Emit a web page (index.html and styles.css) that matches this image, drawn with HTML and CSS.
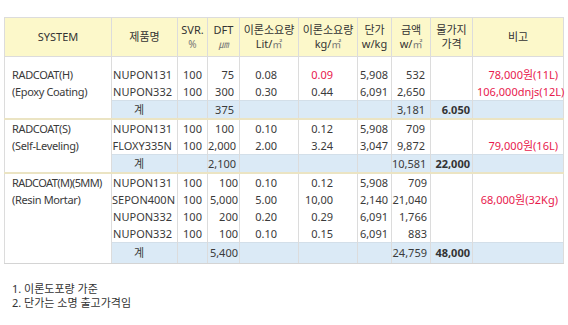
FILE: index.html
```html
<!DOCTYPE html>
<html lang="ko">
<head>
<meta charset="utf-8">
<link rel="stylesheet" href="styles.css">
</head>
<body>
<table class="spec">
  <colgroup>
    <col class="c-sys"><col class="c-prod"><col class="c-svr"><col class="c-dft"><col class="c-lit"><col class="c-kg"><col class="c-unit"><col class="c-amt"><col class="c-price"><col class="c-note">
  </colgroup>
  <thead>
    <tr>
      <th>SYSTEM</th>
      <th>제품명</th>
      <th>SVR.<br><span class="unit">%</span></th>
      <th>DFT<br><span class="unit mu">㎛</span></th>
      <th>이론소요량<br>Lit/<span class="unit">㎡</span></th>
      <th>이론소요량<br>kg/<span class="unit">㎡</span></th>
      <th>단가<br>w/kg</th>
      <th>금액<br>w/<span class="unit">㎡</span></th>
      <th>물가지<br>가격</th>
      <th>비고</th>
    </tr>
  </thead>
  <tbody class="s1">
    <tr class="first">
      <td class="sys">RADCOAT(H)</td><td class="prod">NUPON131</td><td class="svr">100</td><td class="dft">75</td><td class="lit">0.08</td><td class="kg red">0.09</td><td class="unitp">5,908</td><td class="amt">532</td><td class="price"></td><td class="note red">78,000원(11L)</td>
    </tr>
    <tr>
      <td class="sys">(Epoxy Coating)</td><td class="prod">NUPON332</td><td class="svr">100</td><td class="dft">300</td><td class="lit">0.30</td><td class="kg">0.44</td><td class="unitp">6,091</td><td class="amt">2,650</td><td class="price"></td><td class="note red">106,000dnjs(12L)</td>
    </tr>
    <tr class="sum">
      <td class="sys"></td><td class="prod-sum">계</td><td></td><td class="dft">375</td><td></td><td></td><td></td><td class="amt">3,181</td><td class="price">6.050</td><td></td>
    </tr>
  </tbody>
  <tbody class="s2">
    <tr>
      <td class="sys">RADCOAT(S)</td><td class="prod">NUPON131</td><td class="svr">100</td><td class="dft">100</td><td class="lit">0.10</td><td class="kg">0.12</td><td class="unitp">5,908</td><td class="amt">709</td><td class="price"></td><td class="note"></td>
    </tr>
    <tr>
      <td class="sys">(Self-Leveling)</td><td class="prod">FLOXY335N</td><td class="svr">100</td><td class="dft">2,000</td><td class="lit">2.00</td><td class="kg">3.24</td><td class="unitp">3,047</td><td class="amt">9,872</td><td class="price"></td><td class="note red">79,000원(16L)</td>
    </tr>
    <tr class="sum">
      <td class="sys"></td><td class="prod-sum">계</td><td></td><td class="dft">2,100</td><td></td><td></td><td></td><td class="amt">10,581</td><td class="price">22,000</td><td></td>
    </tr>
  </tbody>
  <tbody class="s3">
    <tr>
      <td class="sys tight">RADCOAT(M)(5MM)</td><td class="prod">NUPON131</td><td class="svr">100</td><td class="dft">100</td><td class="lit">0.10</td><td class="kg">0.12</td><td class="unitp">5,908</td><td class="amt">709</td><td class="price"></td><td class="note"></td>
    </tr>
    <tr>
      <td class="sys">(Resin Mortar)</td><td class="prod">SEPON400N</td><td class="svr">100</td><td class="dft">5,000</td><td class="lit">5.00</td><td class="kg">10,00</td><td class="unitp">2,140</td><td class="amt">21,040</td><td class="price"></td><td class="note red">68,000원(32Kg)</td>
    </tr>
    <tr>
      <td class="sys"></td><td class="prod">NUPON332</td><td class="svr">100</td><td class="dft">200</td><td class="lit">0.20</td><td class="kg">0.29</td><td class="unitp">6,091</td><td class="amt">1,766</td><td class="price"></td><td class="note"></td>
    </tr>
    <tr>
      <td class="sys"></td><td class="prod">NUPON332</td><td class="svr">100</td><td class="dft">100</td><td class="lit">0.10</td><td class="kg">0.15</td><td class="unitp">6,091</td><td class="amt">883</td><td class="price"></td><td class="note"></td>
    </tr>
    <tr class="sum">
      <td class="sys"></td><td class="prod-sum">계</td><td></td><td class="dft">5,400</td><td></td><td></td><td></td><td class="amt">24,759</td><td class="price">48,000</td><td></td>
    </tr>
  </tbody>
</table>
<div class="notes">
  <p>1. 이론도포량 가준</p>
  <p>2. 단가는 소명 출고가격임</p>
</div>
</body>
</html>
```

FILE: styles.css
```css
html, body {
  margin: 0;
  padding: 0;
  background: #ffffff;
}
body {
  font-family: "Noto Sans", "Noto Sans CJK KR", sans-serif;
  font-size: 11px;
  color: #3a3a3a;
}
.spec {
  margin: 17px 0 0 4px;
  border-collapse: collapse;
  table-layout: fixed;
  width: 559px;
}
.c-sys { width: 107px; }
.c-prod { width: 66px; }
.c-svr { width: 30px; }
.c-dft { width: 32px; }
.c-lit { width: 59px; }
.c-kg { width: 59px; }
.c-unit { width: 34px; }
.c-amt { width: 39px; }
.c-price { width: 42px; }
.c-note { width: 91px; }

.spec th {
  background: #fcf8ca;
  font-weight: normal;
  color: #333333;
  height: 38px;
  padding: 0;
  line-height: 14px;
  text-align: center;
  vertical-align: middle;
  border: 1px solid #dcdcdc;
  white-space: nowrap;
}
.unit {
  color: #777777;
  font-size: 10px;
}
.mu {
  font-style: italic;
}
.spec td {
  padding: 0 4px;
  height: 17px;
  line-height: 17px;
  white-space: nowrap;
  border-left: 1px solid #dcdcdc;
  border-right: 1px solid #dcdcdc;
  overflow: visible;
}
.spec tr.first td {
  height: 26px;
  vertical-align: bottom;
}
.spec tbody + tbody tr:first-child td {
  border-top: 2px solid #ebe4c3;
}
.s3 tr:last-child td {
  border-bottom: 1px solid #d4d4d4;
}
.sys {
  text-align: left;
  padding-left: 7px !important;
  letter-spacing: -0.35px;
}
.sys.tight {
  letter-spacing: -0.6px;
}
.prod {
  text-align: right;
  padding-right: 5px !important;
  padding-left: 0 !important;
}
.svr { text-align: center; padding: 0 !important; }
.dft { text-align: right; padding-right: 5px !important; padding-left: 0 !important; }
.s3 .dft { padding-right: 1px !important; }
.lit { text-align: right; padding-right: 21px !important; }
.kg { text-align: right; padding-right: 24px !important; }
.unitp { text-align: right; padding-right: 3px !important; padding-left: 0 !important; }
.amt { text-align: right; padding-right: 5px !important; padding-left: 0 !important; }
.s3 .amt { padding-right: 3px !important; }
.price {
  text-align: right;
  padding-right: 2px !important;
  padding-left: 0 !important;
  font-weight: bold;
  color: #333333;
}
.note { text-align: right; padding-right: 5px !important; }
.red { color: #e8194d; }

.spec tr.sum td {
  background: #dbeaf6;
  border-top: 1px solid #d3dfe9;
}
.spec tr.sum td.sys {
  background: #ffffff;
  border-top: none;
}
.s3 tr.sum td {
  height: 20px;
  line-height: 20px;
}
.prod-sum {
  text-align: left;
  padding-left: 22px !important;
}
.notes {
  margin: 18px 0 0 12px;
  color: #333333;
  font-size: 11px;
  line-height: 14px;
}
.notes p {
  margin: 0;
}
```
